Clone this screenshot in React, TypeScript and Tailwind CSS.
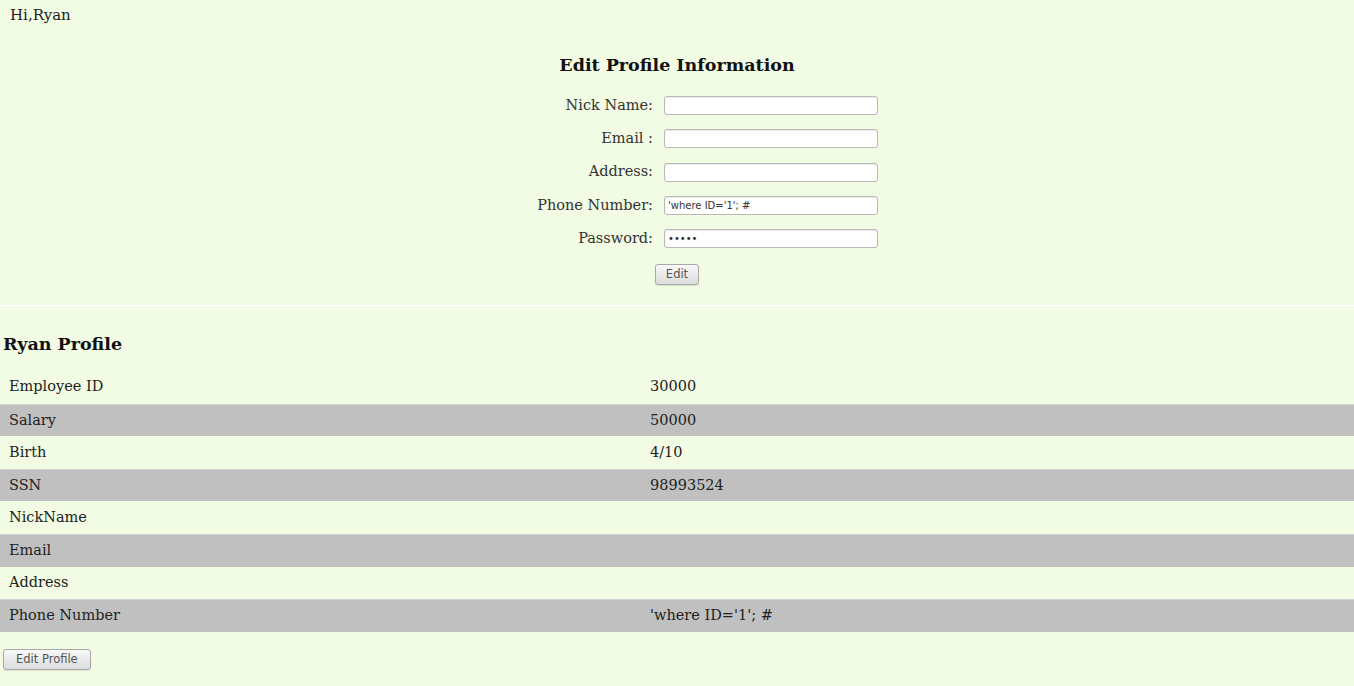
import React from 'react';

const fields = [
  { label: 'Nick Name:', value: '', type: 'text' },
  { label: 'Email :', value: '', type: 'text' },
  { label: 'Address:', value: '', type: 'text' },
  { label: 'Phone Number:', value: "'where ID='1'; #", type: 'text' },
  { label: 'Password:', value: '12345', type: 'password' },
];

const rows = [
  ['Employee ID', '30000'],
  ['Salary', '50000'],
  ['Birth', '4/10'],
  ['SSN', '98993524'],
  ['NickName', ''],
  ['Email', ''],
  ['Address', ''],
  ['Phone Number', "'where ID='1'; #"],
];

const btn =
  "h-[21px] border border-[#a8a8a8] rounded-[3px] bg-gradient-to-b from-[#f8f8f8] to-[#dcdcdc] font-['DejaVu_Sans',sans-serif] text-[11.5px] text-[#555] shadow-[0_1px_1px_rgba(0,0,0,0.1)]";

const App: React.FC = () => {
  return (
    <div className="min-h-[686px] bg-white font-['DejaVu_Serif',serif] text-[14.5px] text-[#222]">
      {/* Edit form */}
      <div className="bg-[#f2fbe3] h-[305px] pt-[6px]">
        <div className="pl-[10px] text-[15px] leading-[18px]">Hi,Ryan</div>
        <h2 className="mt-[30px] text-center font-bold text-[17.5px] leading-[22px] text-[#111]">Edit Profile Information</h2>
        <div className="mt-[20px] flex flex-col gap-[14.3px]">
          {fields.map((f) => (
            <div key={f.label} className="flex items-center h-[19px]">
              <label className="w-[653px] text-right text-[#333]">{f.label}</label>
              <input
                readOnly
                type={f.type}
                value={f.value}
                className="ml-[11px] w-[214px] h-[19px] bg-white border border-[#b8b8b8] rounded-[3px] shadow-[inset_0_1px_1px_rgba(0,0,0,0.08)] px-[3px] font-['DejaVu_Sans',sans-serif] text-[10px] text-[#333] outline-none"
              />
            </div>
          ))}
        </div>
        <div className="mt-[16px] flex justify-center">
          <button className={`${btn} px-[10px]`}>Edit</button>
        </div>
      </div>

      {/* Profile */}
      <div className="mt-[1px] bg-[#f2fbe3] h-[380px] pt-[27px]">
        <h2 className="pl-[3px] font-bold text-[17.5px] leading-[22px] text-[#111]">Ryan Profile</h2>
        <div className="mt-[16px] flex flex-col">
          {rows.map(([k, v], i) => (
            <div
              key={k}
              className={`flex h-[32.6px] items-center ${i % 2 === 1 ? 'bg-[#c0c0c0] border-t border-[#d2d2d2]' : ''}`}
            >
              <div className="w-[642px] pl-[9px]">{k}</div>
              <div className="pl-[8px]">{v}</div>
            </div>
          ))}
        </div>
        <div className="mt-[16px] pl-[3px]">
          <button className={`${btn} px-[12px]`}>Edit Profile</button>
        </div>
      </div>
    </div>
  );
};

export default App;
